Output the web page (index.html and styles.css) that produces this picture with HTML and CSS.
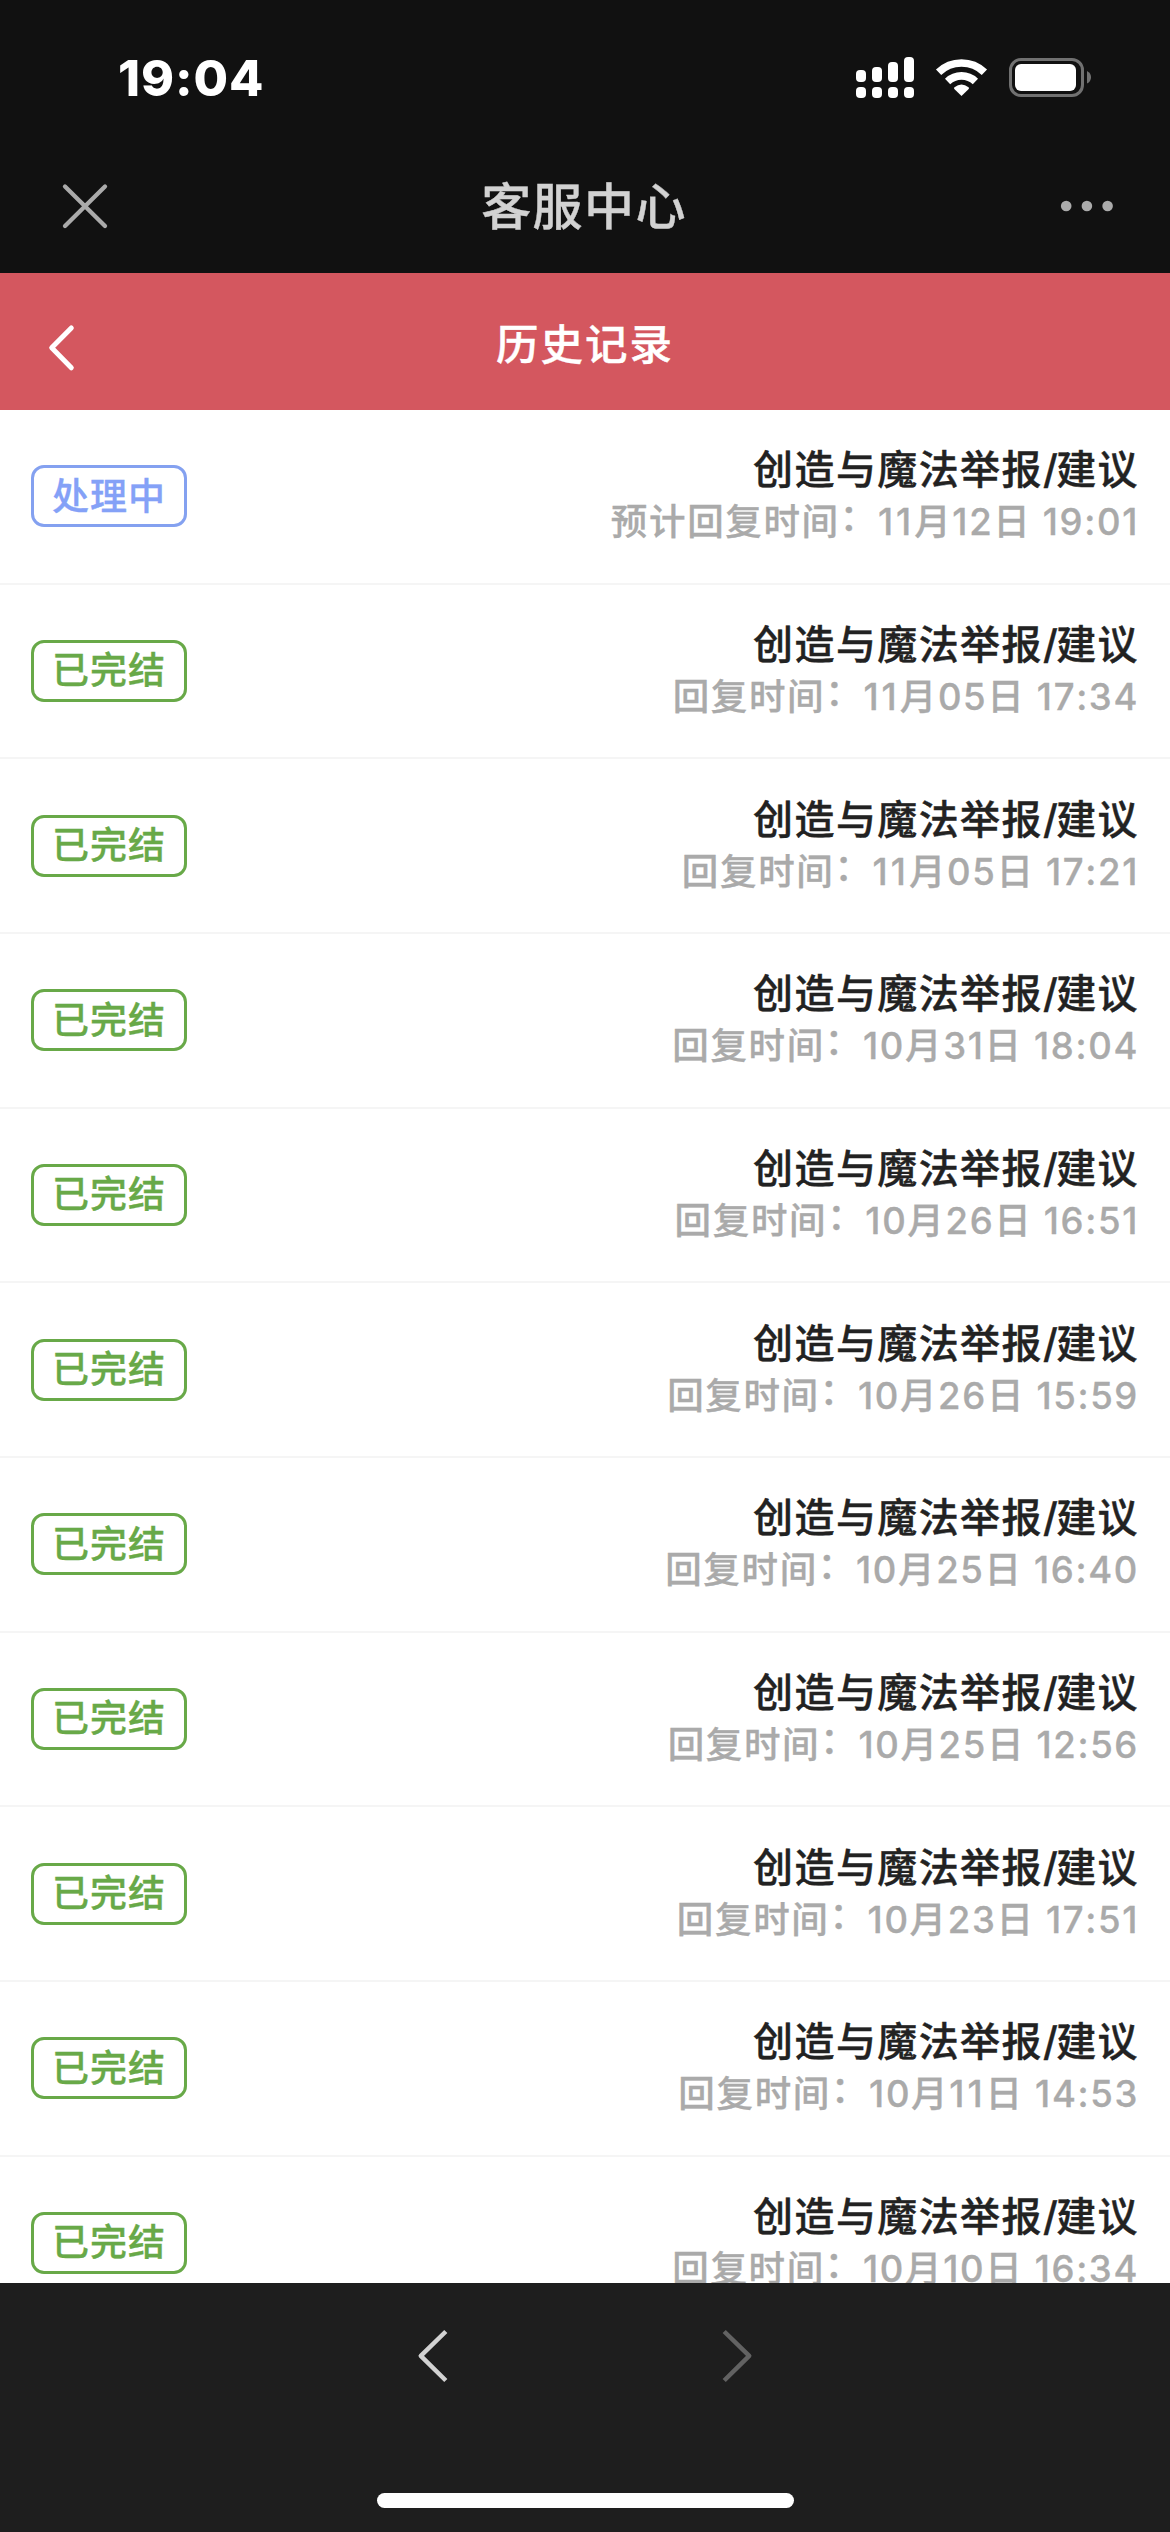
FILE: index.html
```html
<!DOCTYPE html>
<html lang="zh-CN">
<head>
<meta charset="utf-8">
<title>客服中心</title>
<link rel="stylesheet" href="styles.css">
</head>
<body>
<div class="screen">
  <header class="top">
    <div class="status">
      <span class="clock">19:04</span>
      <svg class="status-icons" width="240" height="48" viewBox="853 54 240 48">
        <g fill="#fff">
          <rect x="856" y="70" width="10" height="12" rx="4"/><rect x="872" y="67" width="10" height="15" rx="4"/>
          <rect x="888" y="62" width="10" height="20" rx="4"/><rect x="904" y="57" width="10" height="25" rx="4"/>
          <rect x="856" y="87" width="10" height="11" rx="4"/><rect x="872" y="87" width="10" height="11" rx="4"/>
          <rect x="888" y="87" width="10" height="11" rx="4"/><rect x="904" y="87" width="10" height="11" rx="4"/>
          <path d="M961.500 96 L954.300 89 Q953.500 88 954.500 87.200 Q961.500 81.800 968.500 87.200 Q969.500 88 968.700 89 Z"/>
        </g>
        <g fill="none" stroke="#fff" stroke-width="7.600">
          <path d="M938.600 72.200 A33 33 0 0 1 984.400 72.200"/>
          <path d="M947.600 81.400 A20.200 20.200 0 0 1 975.400 81.400"/>
        </g>
        <rect x="1010.500" y="59.500" width="72" height="36" rx="10.500" fill="none" stroke="#717171" stroke-width="3"/>
        <rect x="1015" y="64" width="61" height="27" rx="6" fill="#fff"/>
        <path d="M1087 71 Q1091 73 1091 77.300 Q1091 81.600 1087 83.600 Z" fill="#717171"/>
      </svg>
    </div>
    <div class="titlebar">
      <svg width="48" height="48" viewBox="61 181 48 48"><path d="M65 185.500 L105 225 M105 185.500 L65 225" stroke="#aaa" stroke-width="4.300" stroke-linecap="round"/></svg>
      <h1 class="app-title">客服中心</h1>
      <svg width="56" height="16" viewBox="0 0 56 16" fill="#ababab"><circle cx="7.200" cy="8" r="5.300"/><circle cx="27.900" cy="8" r="5.300"/><circle cx="48.600" cy="8" r="5.300"/></svg>
    </div>
  </header>
  <nav class="pagebar">
    <svg width="30" height="50" viewBox="47 323 30 50"><path d="M71.300 328 L51.700 347.800 L71.300 367.800" fill="none" stroke="#fff" stroke-width="5" stroke-linecap="round" stroke-linejoin="round"/></svg>
    <h2 class="page-title">历史记录</h2>
    <span class="spacer"></span>
  </nav>
  <main class="list">
    <div class="row"><span class="badge pending">处理中</span><div class="info"><div class="name">创造与魔法举报<span class="slash">/</span>建议</div><div class="time">预计回复时间<span class="colon">：</span><span class="wide">11</span>月12日 19:01</div></div></div>
    <div class="row"><span class="badge">已完结</span><div class="info"><div class="name">创造与魔法举报<span class="slash">/</span>建议</div><div class="time">回复时间<span class="colon">：</span><span class="wide">11</span>月05日 17:34</div></div></div>
    <div class="row"><span class="badge">已完结</span><div class="info"><div class="name">创造与魔法举报<span class="slash">/</span>建议</div><div class="time">回复时间<span class="colon">：</span><span class="wide">11</span>月05日 17:21</div></div></div>
    <div class="row"><span class="badge">已完结</span><div class="info"><div class="name">创造与魔法举报<span class="slash">/</span>建议</div><div class="time">回复时间<span class="colon">：</span>10月31日 18:04</div></div></div>
    <div class="row"><span class="badge">已完结</span><div class="info"><div class="name">创造与魔法举报<span class="slash">/</span>建议</div><div class="time">回复时间<span class="colon">：</span>10月26日 16:51</div></div></div>
    <div class="row"><span class="badge">已完结</span><div class="info"><div class="name">创造与魔法举报<span class="slash">/</span>建议</div><div class="time">回复时间<span class="colon">：</span>10月26日 15:59</div></div></div>
    <div class="row"><span class="badge">已完结</span><div class="info"><div class="name">创造与魔法举报<span class="slash">/</span>建议</div><div class="time">回复时间<span class="colon">：</span>10月25日 16:40</div></div></div>
    <div class="row"><span class="badge">已完结</span><div class="info"><div class="name">创造与魔法举报<span class="slash">/</span>建议</div><div class="time">回复时间<span class="colon">：</span>10月25日 12:56</div></div></div>
    <div class="row"><span class="badge">已完结</span><div class="info"><div class="name">创造与魔法举报<span class="slash">/</span>建议</div><div class="time">回复时间<span class="colon">：</span>10月23日 17:51</div></div></div>
    <div class="row"><span class="badge">已完结</span><div class="info"><div class="name">创造与魔法举报<span class="slash">/</span>建议</div><div class="time">回复时间<span class="colon">：</span>10月<span class="wide">11</span>日 14:53</div></div></div>
    <div class="row"><span class="badge">已完结</span><div class="info"><div class="name">创造与魔法举报<span class="slash">/</span>建议</div><div class="time">回复时间<span class="colon">：</span>10月10日 16:34</div></div></div>
  </main>
  <footer class="toolbar">
    <div class="history">
      <svg width="34" height="58" viewBox="416 2327 34 58"><path d="M445.800 2331.500 L420.800 2355.900 L445.800 2380.500" fill="none" stroke="#d2d2d2" stroke-width="4.500" stroke-linejoin="round"/></svg>
      <svg width="34" height="58" viewBox="720 2327 34 58"><path d="M724.200 2331.500 L749.200 2355.900 L724.200 2380.500" fill="none" stroke="#626262" stroke-width="4.500" stroke-linejoin="round"/></svg>
    </div>
    <div class="home"></div>
  </footer>
</div>
</body>
</html>
```
FILE: styles.css
```css
* { box-sizing: border-box; }
body { margin: 0; font-family: Inter, "Noto Sans CJK SC", sans-serif; }
h1, h2 { margin: 0; font-weight: 500; -webkit-text-stroke: 0.4px currentColor; }
svg { display: block; flex: none; }
.screen { width: 1170px; height: 2532px; display: flex; flex-direction: column; overflow: hidden; background: #fff; }
.top { height: 273px; flex: none; background: #111; }
.status { height: 156px; padding: 0 77px 0 118px; display: flex; align-items: center; justify-content: space-between; }
.clock { color: #fff; font-size: 50px; font-weight: 800; line-height: 60px; letter-spacing: 0.9px; }
.titlebar { height: 100px; padding: 0 55px 0 61px; display: flex; align-items: center; justify-content: space-between; }
.app-title { padding-top: 2px; font-size: 50px; letter-spacing: 1.4px; line-height: 60px; color: #d2d2d2; }
.pagebar { height: 137px; flex: none; padding: 12px 47px 0; display: flex; align-items: center; justify-content: space-between; background: #d4575f; }
.page-title { padding-bottom: 6px; font-size: 42.500px; letter-spacing: 2px; line-height: 60px; color: #fff; }
.spacer { width: 30px; }
.list { flex: 1; min-height: 0; overflow: hidden; }
.row { height: 174.660px; padding: 0 31px; display: flex; align-items: center; justify-content: space-between; border-bottom: 2px solid #f5f5f5; }
.badge { width: 156px; height: 62px; padding-bottom: 5px; display: flex; align-items: center; justify-content: center; border: 3px solid #68a948; border-radius: 13px; color: #68a948; font-size: 37px; font-weight: 500; letter-spacing: 1px; -webkit-text-stroke: 0.3px currentColor; }
.pending { border-color: #84a1f0; color: #84a1f7; }
.info { text-align: right; white-space: nowrap; }
.name { font-size: 40px; line-height: 52px; font-weight: 500; letter-spacing: 1.400px; color: #222; -webkit-text-stroke: 0.4px currentColor; }
.slash { letter-spacing: -1.500px; }
.time { font-size: 36.500px; line-height: 52px; font-weight: 500; letter-spacing: 1.650px; font-kerning: none; color: #aaa; -webkit-text-stroke: 0.3px currentColor; }
.wide { letter-spacing: 3px; }
.colon { line-height: 0; vertical-align: 4px; }
.toolbar { height: 249px; flex: none; padding: 44px 0 24px; display: flex; flex-direction: column; align-items: center; justify-content: space-between; background: #1e1e1e; }
.history { display: flex; gap: 270px; }
.home { width: 417px; height: 15px; border-radius: 8px; background: #fff; }
```
